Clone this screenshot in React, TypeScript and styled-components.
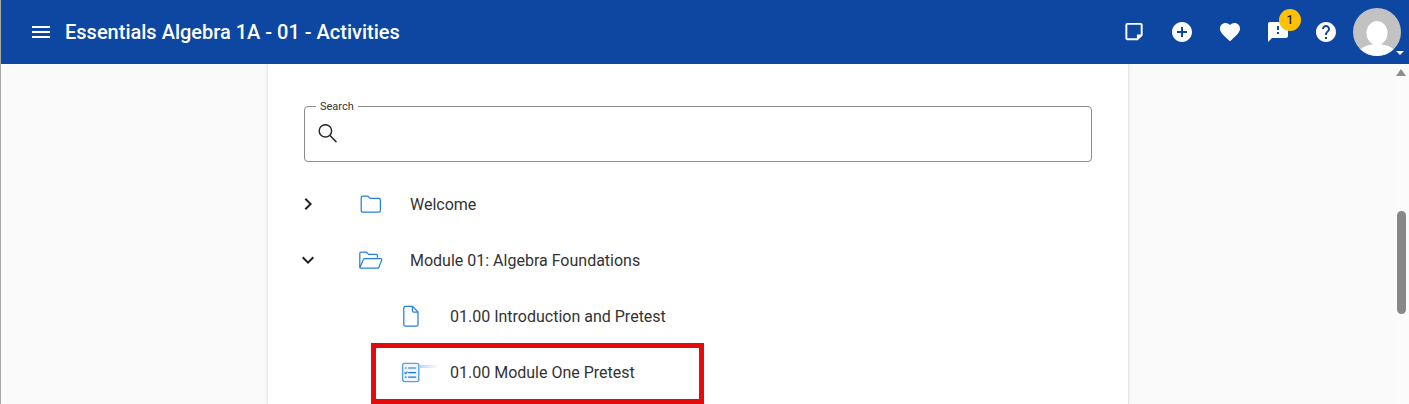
import React from "react";
import styled, { createGlobalStyle } from "styled-components";

const Global = createGlobalStyle`
  html, body { margin: 0; padding: 0; height: 100%; overflow: hidden; background: #fafafa; }
  #root { height: 100%; }
  * { box-sizing: border-box; }
`;

const Page = styled.div`
  height: 404px;
  display: flex;
  flex-direction: column;
  border-left: 1px solid #a8a8a8;
  font-family: Roboto, "Liberation Sans", sans-serif;
  overflow: hidden;
`;

const TopBar = styled.header`
  position: relative;
  z-index: 1;
  flex: 0 0 64px;
  display: flex;
  align-items: center;
  padding: 0 8px 0 28px;
  background: #0d47a1;
  color: #fff;
`;

const MenuButton = styled.span`
  display: flex;
  width: 24px;
  height: 24px;
  margin-right: 12px;
`;

const Title = styled.h1`
  flex: 1;
  margin: 0;
  font-size: 20px;
  font-weight: 500;
  line-height: 24px;
  color: #fff;
`;

const Actions = styled.div`
  display: flex;
  align-items: center;
`;

const ActionButton = styled.span`
  position: relative;
  display: flex;
  align-items: center;
  justify-content: center;
  width: 48px;
  height: 48px;
`;

const Badge = styled.span`
  position: absolute;
  top: 1px;
  left: 25px;
  width: 22px;
  height: 22px;
  border-radius: 50%;
  background: #ffc107;
  color: #212121;
  font-size: 12px;
  font-weight: 500;
  line-height: 22px;
  text-align: center;
`;

const AvatarWrap = styled.span`
  position: relative;
  display: flex;
  width: 48px;
  height: 48px;
  margin-left: 3px;
`;

const Caret = styled.span`
  position: absolute;
  right: -3px;
  bottom: 1px;
  width: 0;
  height: 0;
  border-left: 4px solid transparent;
  border-right: 4px solid transparent;
  border-top: 4px solid #fff;
`;

const Body = styled.div`
  flex: 1;
  min-height: 0;
  display: flex;
`;

const Canvas = styled.main`
  flex: 1;
  min-width: 0;
  display: flex;
  padding-left: 266px;
  padding-right: 267px;
`;

const Panel = styled.section`
  flex: 1;
  padding: 42px 36px 0;
  background: #fff;
  border-left: 1px solid #e6e6e6;
  border-right: 1px solid #e6e6e6;
  box-shadow: 0 0 3px rgba(0, 0, 0, 0.08);
`;

const SearchBox = styled.div`
  position: relative;
  display: flex;
  align-items: center;
  gap: 8px;
  height: 56px;
  padding: 0 12px 0 13px;
  border: 1px solid #8c8c8c;
  border-radius: 4px;
`;

const SearchLabel = styled.span`
  position: absolute;
  top: -7px;
  left: 11px;
  padding: 0 4px;
  background: #fff;
  color: #333;
  font-size: 11px;
  line-height: 13px;
`;

const SearchInput = styled.input`
  flex: 1;
  border: 0;
  outline: 0;
  background: transparent;
  font: inherit;
`;

const Tree = styled.div`
  margin: 14px 0 0 -8px;
`;

const Row = styled.div<{ $child?: boolean }>`
  position: relative;
  display: flex;
  align-items: center;
  height: 56px;
  padding-left: ${(p) => (p.$child ? "103px" : "0")};
  color: #333;
  font-size: 16px;
`;

const Toggle = styled.span`
  display: flex;
  flex: 0 0 24px;
  height: 24px;
  margin-right: 39px;
`;

const ItemIcon = styled.span`
  position: relative;
  display: flex;
  align-items: center;
  justify-content: center;
  flex: 0 0 24px;
  height: 24px;
  margin-right: 27px;
`;

const Streak = styled.span`
  position: absolute;
  left: 21px;
  top: 5px;
  width: 19px;
  height: 3px;
  background: linear-gradient(90deg, #bcd5f3, #ffffff);
`;

const RowText = styled.span`
  padding-top: 2px;
  line-height: 24px;
`;

const Highlight = styled.span`
  position: absolute;
  left: 75px;
  top: -1px;
  width: 333px;
  height: 61px;
  border: 5px solid #e30b0b;
  pointer-events: none;
`;

const ScrollTrack = styled.aside`
  flex: 0 0 13px;
  display: flex;
  flex-direction: column;
  align-items: center;
  padding-top: 5px;
  padding-right: 3px;
  background: #fbfbfb;
`;

const ScrollArrow = styled.span`
  width: 0;
  height: 0;
  border-left: 5px solid transparent;
  border-right: 5px solid transparent;
  border-bottom: 7px solid #8c8c8c;
`;

const ScrollThumb = styled.span`
  width: 9px;
  height: 103px;
  margin-top: 135px;
  border-radius: 5px;
  background: #878787;
`;

const BLUE = "#2a7fdc";

const Mui = ({ d, fill = "#fff", size = 24 }: { d: string; fill?: string; size?: number }) => (
  <svg width={size} height={size} viewBox="0 0 24 24" fill={fill} aria-hidden="true">
    <path d={d} />
  </svg>
);

const P = {
  menu: "M3 18h18v-2H3v2zm0-5h18v-2H3v2zm0-7v2h18V6H3z",
  note: "M18.5 4v10h-4v4H4.5V4h14m0-2H4.5c-1.1 0-2 .9-2 2v14c0 1.1.9 2 2 2h11l5-5V4c0-1.1-.9-2-2-2z",
  add: "M12 2C6.48 2 2 6.48 2 12s4.48 10 10 10 10-4.48 10-10S17.52 2 12 2zm5 11h-4v4h-2v-4H7v-2h4V7h2v4h4v2z",
  heart: "M12 21.35l-1.45-1.32C5.4 15.36 2 12.28 2 8.5 2 5.42 4.42 3 7.5 3c1.74 0 3.34.81 4.5 2.09C13.16 3.81 14.76 3 16.5 3 19.58 3 22 5.42 22 8.5c0 3.78-3.4 6.86-8.55 11.54L12 21.35z",
  feedback: "M20 2H4c-1.1 0-1.99.9-1.99 2L2 22l4-4h14c1.1 0 2-.9 2-2V4c0-1.1-.9-2-2-2zm-7 12h-2v-2h2v2zm0-4h-2V6h2v4z",
  help: "M12 2C6.48 2 2 6.48 2 12s4.48 10 10 10 10-4.48 10-10S17.52 2 12 2zm1 17h-2v-2h2v2zm2.07-7.75l-.9.92C13.45 12.9 13 13.5 13 15h-2v-.5c0-1.1.45-2.1 1.17-2.83l1.24-1.26c.37-.36.59-.86.59-1.41 0-1.1-.9-2-2-2s-2 .9-2 2H8c0-2.21 1.79-4 4-4s4 1.79 4 4c0 .88-.36 1.68-.93 2.25z",
  right: "M10 6 8.59 7.41 13.17 12l-4.58 4.59L10 18l6-6z",
  down: "M16.59 8.59 12 13.17 7.41 8.59 6 10l6 6 6-6z",
};

const Avatar = () => (
  <svg width="48" height="48" viewBox="0 0 48 48" aria-hidden="true">
    <defs>
      <clipPath id="avatar-clip">
        <circle cx="24" cy="24" r="24" />
      </clipPath>
    </defs>
    <g clipPath="url(#avatar-clip)">
      <rect width="48" height="48" fill="#c2c2c2" />
      <ellipse cx="24" cy="25" rx="10.5" ry="12" fill="#fff" />
      <ellipse cx="24" cy="48" rx="20" ry="12" fill="#fff" />
    </g>
  </svg>
);

const SearchIcon = () => (
  <svg width="20" height="20" viewBox="0 0 20 20" fill="none" stroke="#2b2b2b" strokeWidth="1.5" aria-hidden="true">
    <circle cx="7.4" cy="6.9" r="6.2" />
    <path d="M12 11.5 18 17.6" strokeLinecap="round" />
  </svg>
);

const FolderClosed = () => (
  <svg width="24" height="24" viewBox="0 0 24 24" fill="none" stroke={BLUE} strokeWidth="1.25" strokeLinejoin="round" aria-hidden="true">
    <path d="M2.2 5.6c0-.9.7-1.6 1.6-1.6h4.8l2.6 2.4h8.6c.9 0 1.6.7 1.6 1.6v10.6c0 .9-.7 1.6-1.6 1.6H3.8c-.9 0-1.6-.7-1.6-1.6z" />
  </svg>
);

const FolderOpen = () => (
  <svg width="24" height="24" viewBox="0 0 24 24" fill="none" stroke={BLUE} strokeWidth="1.25" strokeLinejoin="round" aria-hidden="true">
    <path d="M.8 19.4V5.4c0-.8.6-1.4 1.4-1.4h5l2.4 2.4h7.4c.8 0 1.4.6 1.4 1.4v2" />
    <path d="M.8 19.6 4.6 11.3c.2-.5.7-.8 1.2-.8h15.8c.8 0 1.4.8 1.1 1.5l-2.9 7.4c-.2.5-.7.8-1.2.8H1.8c-.6 0-1-.3-1-.6z" />
  </svg>
);

const FileIcon = () => (
  <svg width="24" height="24" viewBox="0 0 24 24" fill="none" stroke={BLUE} strokeWidth="1.25" strokeLinejoin="round" aria-hidden="true">
    <path d="M4.8 4c0-.9.7-1.6 1.6-1.6h7.2L19 8v12.6c0 .9-.7 1.6-1.6 1.6h-11c-.9 0-1.6-.7-1.6-1.6z" />
    <path d="M13.4 2.6v4.2c0 .8.6 1.4 1.4 1.4H19" />
  </svg>
);

const ChecklistIcon = () => (
  <svg width="24" height="24" viewBox="0 0 24 24" fill="none" stroke={BLUE} strokeWidth="1.2" strokeLinecap="round" aria-hidden="true">
    <rect x="3.6" y="3.4" width="16.2" height="18.2" rx="2" fill="#eef5fd" stroke="#5a9fe8" strokeWidth="1.4" />
    <path d="M9.6 8h7M9.6 12.6h7M9.6 17.2h7" stroke="#1976d2" />
    <path d="M6.4 8h.8M5.8 12.8l1 .8 1.2-1.6M6.4 17.2h.8" stroke="#1976d2" />
  </svg>
);

const actions = [
  { d: P.note, size: 23 },
  { d: P.add },
  { d: P.heart },
  { d: P.feedback, badge: "1" },
  { d: P.help },
];

export default function App() {
  return (
    <Page>
      <Global />
      <TopBar>
        <MenuButton>
          <Mui d={P.menu} />
        </MenuButton>
        <Title>Essentials Algebra 1A - 01 - Activities</Title>
        <Actions>
          {actions.map((a) => (
            <ActionButton key={a.d}>
              <Mui d={a.d} size={a.size} />
              {a.badge && <Badge>{a.badge}</Badge>}
            </ActionButton>
          ))}
          <AvatarWrap>
            <Avatar />
            <Caret />
          </AvatarWrap>
        </Actions>
      </TopBar>
      <Body>
        <Canvas>
          <Panel>
            <SearchBox>
              <SearchLabel>Search</SearchLabel>
              <SearchIcon />
              <SearchInput aria-label="Search" />
            </SearchBox>
            <Tree>
              <Row>
                <Toggle>
                  <Mui d={P.right} fill="#212121" />
                </Toggle>
                <ItemIcon>
                  <FolderClosed />
                </ItemIcon>
                <RowText>Welcome</RowText>
              </Row>
              <Row>
                <Toggle>
                  <Mui d={P.down} fill="#212121" />
                </Toggle>
                <ItemIcon>
                  <FolderOpen />
                </ItemIcon>
                <RowText>Module 01: Algebra Foundations</RowText>
              </Row>
              <Row $child>
                <ItemIcon>
                  <FileIcon />
                </ItemIcon>
                <RowText>01.00 Introduction and Pretest</RowText>
              </Row>
              <Row $child>
                <ItemIcon>
                  <ChecklistIcon />
                  <Streak />
                </ItemIcon>
                <RowText>01.00 Module One Pretest</RowText>
                <Highlight />
              </Row>
            </Tree>
          </Panel>
        </Canvas>
        <ScrollTrack>
          <ScrollArrow />
          <ScrollThumb />
        </ScrollTrack>
      </Body>
    </Page>
  );
}
